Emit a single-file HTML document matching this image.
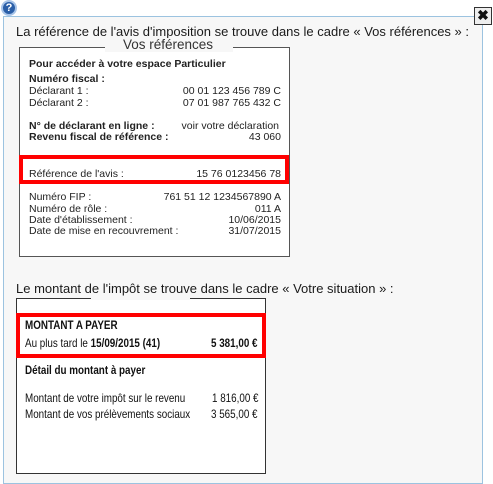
<!DOCTYPE html>
<html><head><meta charset="utf-8"><style>
*{margin:0;padding:0;box-sizing:border-box}
body{width:493px;height:484px;background:#fff;position:relative;overflow:hidden;font-family:"Liberation Sans",sans-serif;color:#222}
.a{position:absolute;white-space:nowrap}
#dlg{position:absolute;left:3px;top:16px;width:480px;height:468px;background:#f7f7f7;border:1px solid #9cc3e0}
.t{font-size:13px;color:#1a1a1a}
.b1{font-size:10.5px;color:#222}
.bold{font-weight:bold}
.r{text-align:right}
.n{font-size:12px;transform-origin:0 0;transform:scaleX(0.82);color:#111}
</style></head><body>
<div class="a" style="left:1px;top:0;width:16px;height:16px;border-radius:50%;background:#2b5fa8;border:2px solid #a8c4e8;color:#fff;font-size:11px;font-weight:bold;text-align:center;line-height:12px">?</div>
<div id="dlg"></div>
<div class="a" style="left:474px;top:7px;width:18px;height:18px;background:#eee;border:1px solid #333;font-size:14px;font-weight:bold;text-align:center;line-height:15px;color:#111">✖</div>
<div class="a t" style="left:16px;top:24px">La référence de l'avis d'imposition se trouve dans le cadre « Vos références » :</div>
<div class="a" style="left:19px;top:47px;width:271px;height:210px;border:1px solid #555;background:#fff"></div>
<div class="a" style="left:105px;top:38px;width:128px;height:14px;background:#f7f7f7"></div>
<div class="a" style="left:123px;top:37px;font-size:13.5px;color:#333">Vos références</div>
<div class="a b1 bold" style="left:29px;top:58px">Pour accéder à votre espace Particulier</div>
<div class="a b1 bold" style="left:29px;top:73px">Numéro fiscal :</div>
<div class="a b1" style="left:29px;top:85px">Déclarant 1 :</div>
<div class="a b1" style="left:29px;top:97px">Déclarant 2 :</div>
<div class="a b1 bold" style="left:29px;top:120px">N° de déclarant en ligne :</div>
<div class="a b1 bold" style="left:29px;top:131px">Revenu fiscal de référence :</div>
<div class="a b1" style="left:29px;top:168px">Référence de l'avis :</div>
<div class="a b1" style="left:29px;top:191px">Numéro FIP :</div>
<div class="a b1" style="left:29px;top:203px">Numéro de rôle :</div>
<div class="a b1" style="left:29px;top:214px">Date d'établissement :</div>
<div class="a b1" style="left:29px;top:225px">Date de mise en recouvrement :</div>
<div class="a b1 r" style="right:212px;top:85px">00 01 123 456 789 C</div>
<div class="a b1 r" style="right:212px;top:97px">07 01 987 765 432 C</div>
<div class="a b1 r" style="right:214px;top:120px">voir votre déclaration</div>
<div class="a b1 r" style="right:212px;top:131px">43 060</div>
<div class="a b1 r" style="right:212px;top:168px">15 76 0123456 78</div>
<div class="a b1 r" style="right:212px;top:191px">761 51 12 1234567890 A</div>
<div class="a b1 r" style="right:212px;top:203px">011 A</div>
<div class="a b1 r" style="right:212px;top:214px">10/06/2015</div>
<div class="a b1 r" style="right:212px;top:225px">31/07/2015</div>
<div class="a" style="left:19px;top:155px;width:270px;height:29px;border:4px solid #f00"></div>
<div class="a t" style="left:16px;top:281px">Le montant de l'impôt se trouve dans le cadre « Votre situation » :</div>
<div class="a" style="left:16px;top:298px;width:250px;height:176px;border:1.5px solid #333;background:#fff"></div>
<div class="a" style="left:91px;top:296px;width:99px;height:4px;background:#f7f7f7"></div>
<div class="a" style="left:16px;top:313px;width:250px;height:45px;border:4px solid #f00"></div>
<div class="a n bold" style="left:25px;top:318px">MONTANT A PAYER</div>
<div class="a n" style="left:25px;top:336px">Au plus tard le <b>15/09/2015 (41)</b></div>
<div class="a n bold" style="left:211px;top:336px">5 381,00 €</div>
<div class="a n bold" style="left:25px;top:363px">Détail du montant à payer</div>
<div class="a n" style="left:25px;top:391px">Montant de votre impôt sur le revenu</div>
<div class="a n" style="left:25px;top:407px">Montant de vos prélèvements sociaux</div>
<div class="a n" style="left:212px;top:391px">1 816,00 €</div>
<div class="a n" style="left:211px;top:407px">3 565,00 €</div>
</body></html>
